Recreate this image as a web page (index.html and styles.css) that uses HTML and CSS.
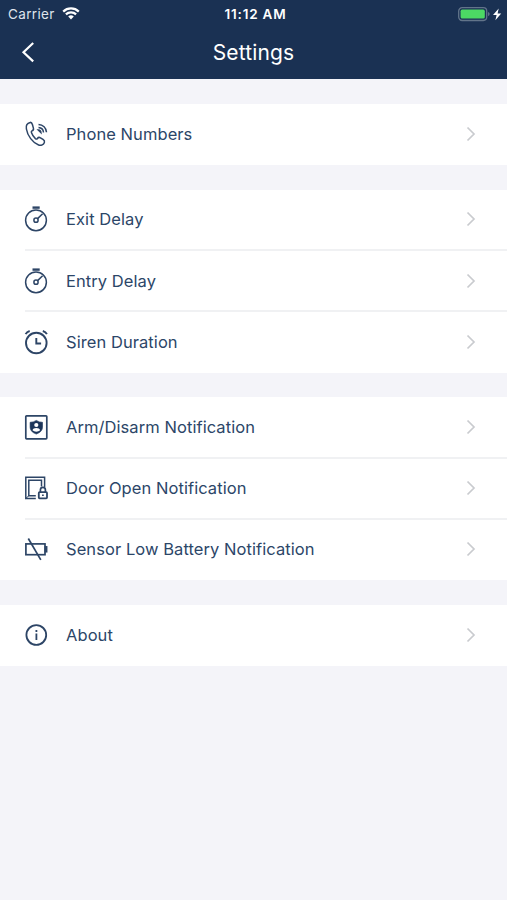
FILE: index.html
```html
<!DOCTYPE html>
<html lang="en">
<head>
<meta charset="utf-8">
<title>Settings</title>
<link rel="stylesheet" href="styles.css">
</head>
<body>
<svg width="0" height="0" class="defs">
  <symbol id="chevron" viewBox="0 0 10 16"><path d="M1.5 1.5 8 8l-6.5 6.5" fill="none" stroke="#c9cbcf" stroke-width="1.7"/></symbol>
  <symbol id="stopwatch" viewBox="0 0 28 28"><circle cx="14" cy="15.3" r="10.4"/><path d="M10.5 2.6h7.2" stroke-width="2.4"/><path d="M15.6 13.6l5-4.8"/><circle cx="14" cy="15.2" r="2.1"/></symbol>
</svg>
<header class="header">
  <div class="status">
    <div class="carrier"><span>Carrier</span>
      <svg class="wifi" width="18" height="13" viewBox="0 0 18 13"><path d="M1.2 4.6a11.2 11.2 0 0 1 15.6 0M3.9 7.4a7.3 7.3 0 0 1 10.2 0" fill="none" stroke="#fff" stroke-width="2.2"/><path d="M6.2 9.6a4 4 0 0 1 5.6 0L9 12.5z" fill="#fff"/></svg>
    </div>
    <div class="time">11:12 AM</div>
    <svg class="battery" width="45" height="16" viewBox="0 0 45 16"><rect x=".7" y="1.7" width="28" height="12.8" rx="3.4" fill="none" stroke="#62748a" stroke-width="1.3"/><rect x="2.6" y="3.6" width="24.2" height="9" rx="1.6" fill="#4cd964"/><path d="M30 6v4.2q1.7-.5 1.7-2.1T30 6z" fill="#62748a"/><path d="M40.7 2.6 35 9h3.6l-1.2 5.3L43.2 7.6h-3.6z" fill="#fff"/></svg>
  </div>
  <nav class="nav">
    <svg class="back" width="14" height="22" viewBox="0 0 14 22"><path d="M12.2 2 2.5 11.2l9.7 9.2" fill="none" stroke="#fff" stroke-width="2.2"/></svg>
    <h1>Settings</h1>
  </nav>
</header>
<main>
  <section class="group">
    <div class="row">
      <svg class="icon" viewBox="0 0 28 28"><path d="M8.2 2.4C5.4 3 3.8 5.6 4.4 9c1 6.6 6.3 13.7 12.2 16 2.6 1 5-.5 5.8-2.6.5-1.3-.3-2.2-1.4-3l-2.6-1.6c-1.3-.8-2.3-.3-3 .7-.6.8-1.3.7-2 .1-2-1.8-3.2-3.7-4-6-.3-.9 0-1.5.8-1.9 1.1-.5 1.6-1.3 1.2-2.6l-1-3.6c-.4-1.4-1-2.3-2.2-2.1z"/><path d="M16.5 4.4c4.5.2 7.7 3.5 8 7.8M16.5 7.5c2.8.2 4.8 2.2 5 5"/><path d="M16.4 10.1c1.5.1 2.4 1 2.5 2.5z" fill="#1c355a"/></svg>
      <span class="label">Phone Numbers</span><svg class="chevron"><use href="#chevron"/></svg>
    </div>
  </section>
  <section class="group">
    <div class="row">
      <svg class="icon"><use href="#stopwatch"/></svg>
      <span class="label">Exit Delay</span><svg class="chevron"><use href="#chevron"/></svg>
    </div>
    <div class="row">
      <svg class="icon"><use href="#stopwatch"/></svg>
      <span class="label">Entry Delay</span><svg class="chevron"><use href="#chevron"/></svg>
    </div>
    <div class="row">
      <svg class="icon" viewBox="0 0 28 28"><g stroke-width="1.9"><circle cx="14.3" cy="15" r="10.3"/><path d="M14.3 10v5.5h4.8M3.6 6.2q1.2-2.4 4.1-3.2M24.9 6.2q-1.2-2.4-4.1-3.2"/></g></svg>
      <span class="label">Siren Duration</span><svg class="chevron"><use href="#chevron"/></svg>
    </div>
  </section>
  <section class="group">
    <div class="row">
      <svg class="icon" viewBox="0 0 28 28"><rect x="3.8" y="2.8" width="21" height="23" rx=".8" stroke-width="1.7"/><path d="M14.3 7.4q3 1.9 6.2 1.9v4.9q0 4.6-6.2 6.9-6.2-2.3-6.2-6.9V9.3q3.2 0 6.2-1.9z" fill="#1c355a" stroke="#1c355a" stroke-width=".6"/><circle cx="14.3" cy="12" r="2.1" fill="#fff" stroke="none"/><path d="M10.5 17.3q.6-2.4 3.8-2.4t3.8 2.4q-1.4 1.4-3.8 1.4t-3.8-1.4z" fill="#fff" stroke="none"/></svg>
      <span class="label">Arm/Disarm Notification</span><svg class="chevron"><use href="#chevron"/></svg>
    </div>
    <div class="row">
      <svg class="icon" viewBox="0 0 28 28"><path d="M13.8 24.4H3.8V3.3h18.8v9.6"/><path d="M13.8 21.8H6.8V6.3h12.7v6.2"/><path d="M6.8 21.8l-3 2.6" stroke-width="1"/><rect x="16.8" y="18.2" width="8.2" height="6.2" rx=".8" stroke-width="1.8"/><path d="M18.4 18v-2.2a2.5 2.5 0 0 1 5 0V18M20.9 20.5v1.4" stroke-width="1.7"/></svg>
      <span class="label">Door Open Notification</span><svg class="chevron"><use href="#chevron"/></svg>
    </div>
    <div class="row">
      <svg class="icon" viewBox="0 0 28 28"><rect x="3.9" y="8.9" width="19.1" height="10.8" stroke-width="1.7"/><path d="M23.3 11.8h1.4v5h-1.4z" fill="#1c355a"/><path d="M6.3 3.5 18.8 24.9" stroke-width="1.7"/></svg>
      <span class="label">Sensor Low Battery Notification</span><svg class="chevron"><use href="#chevron"/></svg>
    </div>
  </section>
  <section class="group">
    <div class="row">
      <svg class="icon" viewBox="0 0 28 28"><circle cx="14.3" cy="14" r="9.9" stroke-width="1.8"/><path d="M14.4 12.4v6.5M14.4 9v1.9" stroke-width="1.8"/></svg>
      <span class="label">About</span><svg class="chevron"><use href="#chevron"/></svg>
    </div>
  </section>
</main>
</body>
</html>
```
FILE: styles.css
```css
* { box-sizing: border-box; }
body {
  margin: 0;
  min-height: 900px;
  background: #f4f4f9;
  font-family: Inter, "Liberation Sans", sans-serif;
}
.defs { display: block; height: 0; }
.header {
  height: 79px;
  background: #1a3153;
  color: #fff;
}
.status {
  display: grid;
  grid-template-columns: 1fr auto 1fr;
  align-items: center;
  height: 27px;
  padding: 0 4px 0 8px;
  font-size: 13.5px;
}
.carrier { display: flex; align-items: center; gap: 7px; color: #dfe4ec; letter-spacing: .35px; }
.time { font-size: 13.5px; font-weight: 600; letter-spacing: .8px; }
.battery { justify-self: end; }
.nav {
  display: grid;
  grid-template-columns: 40px 1fr 40px;
  align-items: center;
  height: 50px;
}
.back { margin-left: 21px; }
.nav h1 {
  margin: 0;
  text-align: center;
  font-size: 21px;
  font-weight: 400;
  letter-spacing: .15px;
}
main {
  display: flex;
  flex-direction: column;
  gap: 24.5px;
  padding-top: 25px;
}
.group { background: #fff; }
.row {
  display: flex;
  align-items: center;
  height: 61px;
  margin-left: 25px;
  padding: 0 31px 1px 0;
}
.row:not(:last-child) { border-bottom: 2px solid #f0f1f3; padding-bottom: 0; }
.row:first-child:not(:last-child) { height: 61.5px; }
.row:last-child:not(:first-child) { height: 60.5px; }
.icon {
  width: 28px;
  height: 28px;
  margin-left: -3px;
  fill: none;
  stroke: #2d4566;
  stroke-width: 1.5;
}
.label {
  flex: 1;
  margin-left: 16px;
  color: #2c4668;
  font-size: 16.5px;
  letter-spacing: .07px;
}
.chevron { width: 10px; height: 16px; }
```
